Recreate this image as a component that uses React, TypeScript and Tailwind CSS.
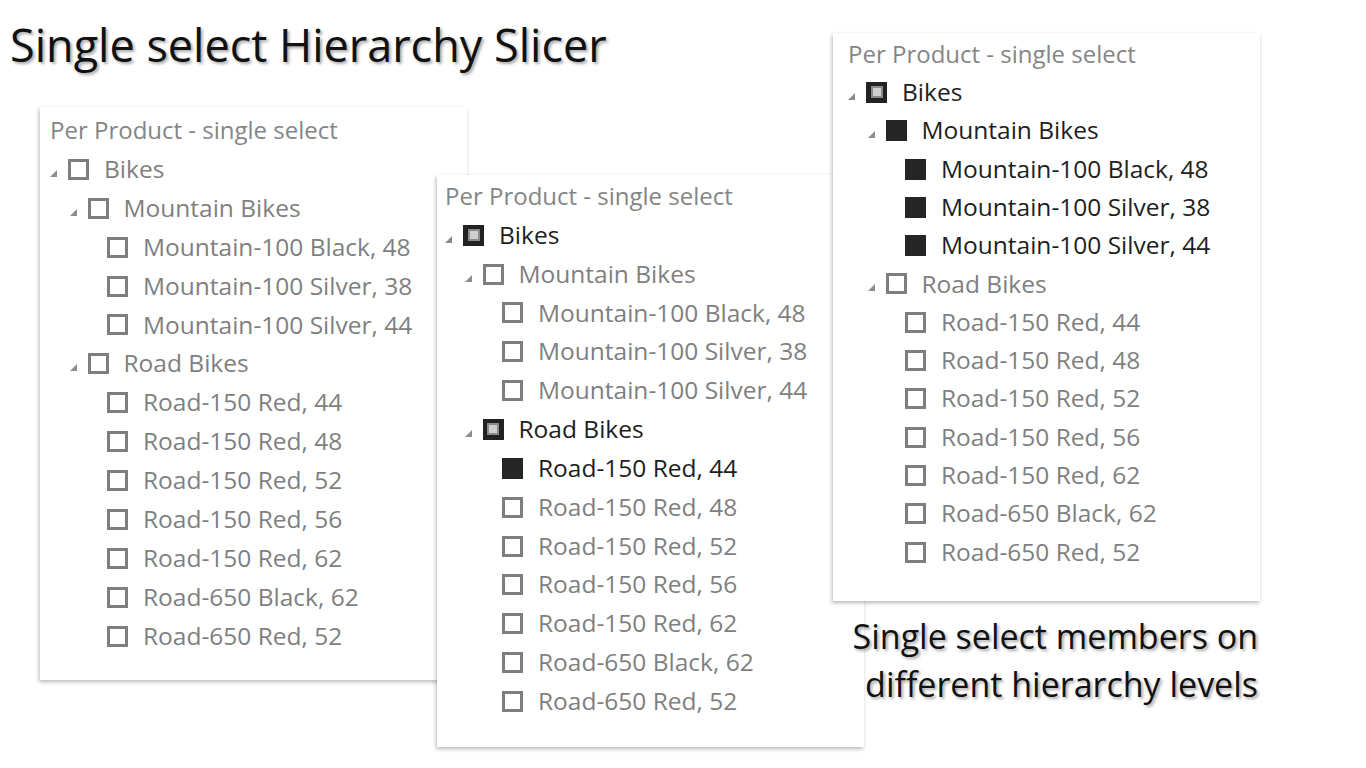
type Sel = "none" | "full" | "partial";

type Row = { label: string; level: number; parent?: boolean; sel?: Sel };

const FONT = { fontFamily: '"Open Sans", "Noto Sans", sans-serif' };

function makeRows(selected: Record<string, Sel>): Row[] {
  const base: Row[] = [
    { label: "Bikes", level: 0, parent: true },
    { label: "Mountain Bikes", level: 1, parent: true },
    { label: "Mountain-100 Black, 48", level: 2 },
    { label: "Mountain-100 Silver, 38", level: 2 },
    { label: "Mountain-100 Silver, 44", level: 2 },
    { label: "Road Bikes", level: 1, parent: true },
    { label: "Road-150 Red, 44", level: 2 },
    { label: "Road-150 Red, 48", level: 2 },
    { label: "Road-150 Red, 52", level: 2 },
    { label: "Road-150 Red, 56", level: 2 },
    { label: "Road-150 Red, 62", level: 2 },
    { label: "Road-650 Black, 62", level: 2 },
    { label: "Road-650 Red, 52", level: 2 },
  ];
  return base.map((r) => ({ ...r, sel: selected[r.label] ?? "none" }));
}

function Check({ sel }: { sel: Sel }) {
  if (sel === "full") return <span className="block h-[21px] w-[21px] shrink-0 bg-[#252525]" />;
  if (sel === "partial")
    return (
      <span className="flex h-[21px] w-[21px] shrink-0 items-center justify-center bg-[#222]">
        <span className="flex h-[12px] w-[12px] items-center justify-center bg-[#8a8a8a]">
          <span className="block h-[8px] w-[8px] bg-[#cfcfcf]" />
        </span>
      </span>
    );
  return <span className="block h-[21px] w-[21px] shrink-0 border-[3px] border-[#7e7e7e] bg-white" />;
}

function Caret() {
  return (
    <svg width="7" height="7" viewBox="0 0 7 7" className="mt-[8px]">
      <polygon points="7,0 7,7 0,7" fill="#8c8c8c" />
    </svg>
  );
}

function Slicer({
  rows,
  className,
  padLeft,
  rowH,
}: {
  rows: Row[];
  className: string;
  padLeft: string;
  rowH: number;
}) {
  return (
    <div
      className={`absolute w-[427px] bg-white shadow-[-1px_2px_4px_rgba(0,0,0,0.28)] ${className}`}
      style={FONT}
    >
      <div className={`flex flex-col ${padLeft}`}>
        <div className="flex items-center text-[24px] text-[#858585]" style={{ height: rowH }}>
          Per Product - single select
        </div>
        {rows.map((r) => (
          <div
            key={r.label}
            className="flex items-center"
            style={{ paddingLeft: r.level * 19.5, height: rowH }}
          >
            <span className="flex w-[18px] shrink-0 items-center">{r.parent && <Caret />}</span>
            <Check sel={r.sel!} />
            <span
              className={`ml-[15px] whitespace-nowrap text-[24.5px] ${
                r.sel === "none" ? "text-[#7f7f7f]" : "text-[#1e1e1e]"
              }`}
            >
              {r.label}
            </span>
          </div>
        ))}
      </div>
    </div>
  );
}

export default function App() {
  const rows1 = makeRows({});
  const rows2 = makeRows({ Bikes: "partial", "Road Bikes": "partial", "Road-150 Red, 44": "full" });
  const rows3 = makeRows({
    Bikes: "partial",
    "Mountain Bikes": "full",
    "Mountain-100 Black, 48": "full",
    "Mountain-100 Silver, 38": "full",
    "Mountain-100 Silver, 44": "full",
  });

  return (
    <div className="relative h-[768px] w-[1366px] overflow-hidden bg-white" style={FONT}>
      <h1 className="absolute left-[10px] top-[17px] text-[45px] leading-tight text-[#111] [text-shadow:2px_2px_3px_rgba(0,0,0,0.35)]">
        Single select Hierarchy Slicer
      </h1>

      <Slicer rows={rows1} className="left-[40px] top-[107px] h-[573px] pt-[4px]" padLeft="pl-[10px]" rowH={38.9} />
      <Slicer rows={rows2} className="left-[437px] top-[175px] h-[572px] pt-[2px]" padLeft="pl-[8px]" rowH={38.85} />
      <Slicer rows={rows3} className="left-[833px] top-[33px] h-[568px] pt-[2px]" padLeft="pl-[15px]" rowH={38.3} />

      <p className="absolute right-[108px] top-[612px] text-right text-[34px] leading-[48px] text-[#111] [text-shadow:2px_2px_3px_rgba(0,0,0,0.35)]">
        Single select members on
        <br />
        different hierarchy levels
      </p>
    </div>
  );
}
